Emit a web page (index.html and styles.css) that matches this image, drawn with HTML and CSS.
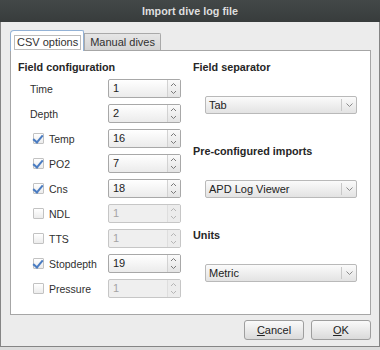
FILE: index.html
```html
<!DOCTYPE html>
<html lang="en">
<head>
    <meta charset="UTF-8">
    <title>Import dive log file</title>
    <link rel="stylesheet" href="styles.css">
</head>
<body>
    <div class="window">
        <div class="titlebar">Import dive log file</div>
        <div class="dialog">
            <div class="tabs">
                <div class="tab active"><span class="focus">CSV options</span></div>
                <div class="tab">Manual dives</div>
            </div>
            <div class="pane">
                <div class="fields">
                    <h3>Field configuration</h3>
                    <div class="row"><span class="label plain">Time</span>
                        <div class="spin"><span class="val">1</span><span class="arrows"><svg width="11" height="17" viewBox="0 0 11 17"><path d="M3 6 L5.5 3.5 L8 6 M3 11 L5.5 13.5 L8 11" fill="none" stroke="#7a7a7a" stroke-width="1"/></svg></span></div>
                    </div>
                    <div class="row"><span class="label plain">Depth</span>
                        <div class="spin"><span class="val">2</span><span class="arrows"><svg width="11" height="17" viewBox="0 0 11 17"><path d="M3 6 L5.5 3.5 L8 6 M3 11 L5.5 13.5 L8 11" fill="none" stroke="#7a7a7a" stroke-width="1"/></svg></span></div>
                    </div>
                    <div class="row"><span class="label"><span class="check on"></span>Temp</span>
                        <div class="spin"><span class="val">16</span><span class="arrows"><svg width="11" height="17" viewBox="0 0 11 17"><path d="M3 6 L5.5 3.5 L8 6 M3 11 L5.5 13.5 L8 11" fill="none" stroke="#7a7a7a" stroke-width="1"/></svg></span></div>
                    </div>
                    <div class="row"><span class="label"><span class="check on"></span>PO2</span>
                        <div class="spin"><span class="val">7</span><span class="arrows"><svg width="11" height="17" viewBox="0 0 11 17"><path d="M3 6 L5.5 3.5 L8 6 M3 11 L5.5 13.5 L8 11" fill="none" stroke="#7a7a7a" stroke-width="1"/></svg></span></div>
                    </div>
                    <div class="row"><span class="label"><span class="check on"></span>Cns</span>
                        <div class="spin"><span class="val">18</span><span class="arrows"><svg width="11" height="17" viewBox="0 0 11 17"><path d="M3 6 L5.5 3.5 L8 6 M3 11 L5.5 13.5 L8 11" fill="none" stroke="#7a7a7a" stroke-width="1"/></svg></span></div>
                    </div>
                    <div class="row"><span class="label"><span class="check"></span>NDL</span>
                        <div class="spin off"><span class="val">1</span><span class="arrows"><svg width="11" height="17" viewBox="0 0 11 17"><path d="M3 6 L5.5 3.5 L8 6 M3 11 L5.5 13.5 L8 11" fill="none" stroke="#b5b5b5" stroke-width="1"/></svg></span></div>
                    </div>
                    <div class="row"><span class="label"><span class="check"></span>TTS</span>
                        <div class="spin off"><span class="val">1</span><span class="arrows"><svg width="11" height="17" viewBox="0 0 11 17"><path d="M3 6 L5.5 3.5 L8 6 M3 11 L5.5 13.5 L8 11" fill="none" stroke="#b5b5b5" stroke-width="1"/></svg></span></div>
                    </div>
                    <div class="row"><span class="label"><span class="check on"></span>Stopdepth</span>
                        <div class="spin"><span class="val">19</span><span class="arrows"><svg width="11" height="17" viewBox="0 0 11 17"><path d="M3 6 L5.5 3.5 L8 6 M3 11 L5.5 13.5 L8 11" fill="none" stroke="#7a7a7a" stroke-width="1"/></svg></span></div>
                    </div>
                    <div class="row"><span class="label"><span class="check"></span>Pressure</span>
                        <div class="spin off"><span class="val">1</span><span class="arrows"><svg width="11" height="17" viewBox="0 0 11 17"><path d="M3 6 L5.5 3.5 L8 6 M3 11 L5.5 13.5 L8 11" fill="none" stroke="#b5b5b5" stroke-width="1"/></svg></span></div>
                    </div>
                </div>
                <div class="options">
                    <div class="group">
                        <h3>Field separator</h3>
                        <div class="combo"><span class="val">Tab</span><span class="drop"><svg width="9" height="6" viewBox="0 0 9 6"><path d="M1.5 1.5 L4.5 4.5 L7.5 1.5" fill="none" stroke="#8a8a8a"/></svg></span></div>
                    </div>
                    <div class="group">
                        <h3>Pre-configured imports</h3>
                        <div class="combo"><span class="val">APD Log Viewer</span><span class="drop"><svg width="9" height="6" viewBox="0 0 9 6"><path d="M1.5 1.5 L4.5 4.5 L7.5 1.5" fill="none" stroke="#8a8a8a"/></svg></span></div>
                    </div>
                    <div class="group">
                        <h3>Units</h3>
                        <div class="combo"><span class="val">Metric</span><span class="drop"><svg width="9" height="6" viewBox="0 0 9 6"><path d="M1.5 1.5 L4.5 4.5 L7.5 1.5" fill="none" stroke="#8a8a8a"/></svg></span></div>
                    </div>
                </div>
            </div>
            <div class="buttons">
                <button type="button" class="btn"><u>C</u>ancel</button>
                <button type="button" class="btn"><u>O</u>K</button>
            </div>
        </div>
    </div>
</body>
</html>
```

FILE: styles.css
```css
html {
    background-color: #dcdcdc;
}
body {
    font-family: "Liberation Sans", Arial, sans-serif;
    font-size: 10.5px;
    color: #303030;
    margin: 0;
    padding: 0;
}
.window {
    width: 380px;
    height: 347px;
    box-sizing: border-box;
    background-color: #ececec;
    border: 1px solid #858585;
    border-top: none;
}
.titlebar {
    height: 22px;
    line-height: 22px;
    margin: 0 -1px;
    background: linear-gradient(#434848, #383c3c);
    color: #dedede;
    font-weight: bold;
    font-size: 10.8px;
    text-align: center;
}
.dialog {
    padding: 8px 8px 0 9px;
}
.tabs {
    display: flex;
    align-items: flex-end;
    height: 20px;
}
.tab {
    height: 17px;
    box-sizing: border-box;
    padding: 0 5px;
    line-height: 16px;
    background: linear-gradient(#e6e6e6, #d4d4d4);
    border: 1px solid #a9a9a9;
    border-bottom: none;
    border-top-right-radius: 2px;
    font-size: 11px;
}
.tab.active {
    position: relative;
    z-index: 1;
    height: 21px;
    margin-bottom: -1px;
    padding: 4px 2px 0 3px;
    background: #fff;
    border-color: #93b2d6;
    border-top-left-radius: 4px;
    line-height: 13px;
}
.focus {
    display: inline-block;
    border: 1px solid #bcbcbc;
    padding: 0 2px;
}
.pane {
    height: 265px;
    box-sizing: border-box;
    display: flex;
    gap: 12px;
    padding: 9px 13px 0 7px;
    background-color: #fff;
    border: 1px solid #a6a6a6;
}
h3 {
    margin: 0;
    height: 14px;
    line-height: 14px;
    font-size: 10.8px;
    font-weight: bold;
    color: #262626;
}
.fields {
    width: 163px;
}
.fields h3 {
    margin-bottom: 2px;
}
.row {
    display: flex;
    align-items: center;
    height: 25px;
}
.label {
    width: 90px;
    display: flex;
    align-items: center;
    padding-left: 15px;
    box-sizing: border-box;
}
.label.plain {
    padding-left: 12px;
}
.check {
    width: 9px;
    height: 9px;
    margin-right: 5px;
    border: 1px solid #c2c2c2;
    border-radius: 1px;
    background: linear-gradient(#fff, #ececec);
    position: relative;
}
.check.on::after {
    content: "";
    position: absolute;
    left: 1px;
    top: -1px;
    width: 4px;
    height: 8px;
    border: solid #4a7cc2;
    border-width: 0 2px 2px 0;
    transform: rotate(40deg);
}
.spin {
    width: 73px;
    height: 19px;
    box-sizing: border-box;
    display: flex;
    border: 1px solid #a8a8a8;
    border-radius: 2px;
    background: linear-gradient(#ffffff, #ebebeb);
}
.spin .val {
    flex-grow: 1;
    padding-left: 4px;
    line-height: 17px;
    font-size: 11px;
    color: #222;
}
.spin .arrows {
    width: 12px;
    border-left: 1px solid #d2d2d2;
    background: linear-gradient(#fafafa, #e4e4e4);
}
.spin .arrows svg {
    display: block;
}
.spin.off {
    border-color: #c6c6c6;
    background: #efefef;
}
.spin.off .val {
    color: #a4a4a4;
}
.spin.off .arrows {
    background: #ececec;
    border-left-color: #dedede;
}
.options {
    flex-grow: 1;
}
.group {
    margin-bottom: 30px;
}
.group h3 {
    margin-bottom: 22px;
}
.combo {
    margin-left: 12px;
    height: 18px;
    box-sizing: border-box;
    display: flex;
    align-items: center;
    border: 1px solid #b9b9b9;
    border-radius: 2px;
    background: linear-gradient(#fbfbfb, #e3e3e3);
    font-size: 11px;
    color: #222;
}
.combo .val {
    flex-grow: 1;
    padding-left: 3px;
}
.combo .drop {
    width: 14px;
    height: 12px;
    border-left: 1px solid #c8c8c8;
    display: flex;
    align-items: center;
    justify-content: center;
}
.buttons {
    display: flex;
    justify-content: flex-end;
    gap: 7px;
    padding-top: 5px;
}
.btn {
    width: 60px;
    height: 20px;
    padding: 0;
    font-family: inherit;
    font-size: 11px;
    color: #222;
    border: 1px solid #9e9e9e;
    border-radius: 3px;
    background: linear-gradient(#fafafa, #dadada);
}
```
